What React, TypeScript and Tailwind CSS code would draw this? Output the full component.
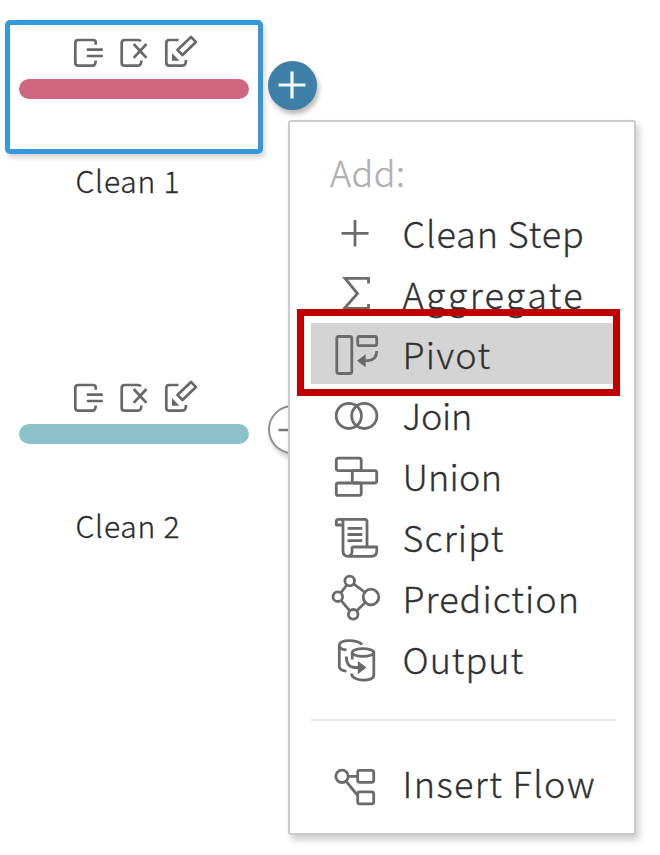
import type { ReactNode } from "react";

type ItemProps = {
  label: string;
  top: number;
  spacing: string;
  active?: boolean;
  children: ReactNode;
};

function MenuItem({ label, top, spacing, active, children }: ItemProps) {
  return (
    <li className={`flex h-[61px] items-center pl-[19px] ${active ? "bg-[#d4d4d4]" : ""}`}>
      <svg
        width="56"
        height="61"
        viewBox={`330 ${top} 56 61`}
        className="shrink-0"
        fill="none"
        stroke="#6b6b6b"
        strokeWidth="2.8"
        strokeLinejoin="round"
      >
        {children}
      </svg>
      <span className={`ml-[16.5px] whitespace-nowrap text-[36px] leading-[61px] ${spacing}`}>{label}</span>
    </li>
  );
}

function StepIcons() {
  return (
    <svg
      width="130"
      height="36"
      viewBox="70 34 130 36"
      className="block"
      fill="none"
      stroke="#686868"
      strokeWidth="2.7"
      strokeLinejoin="round"
    >
      <path d="M95.7 44.8V42.4Q95.7 40 93.3 40H78.3Q75.3 40 75.3 43V62.7Q75.3 65.7 78.3 65.7H92.5Q95.7 65.7 95.7 60.5M86.8 49.7H102.8M86.8 56H102.8" />
      <path d="M140.7 41.5Q140 40 138 40H124.7Q121.7 40 121.7 43V62.7Q121.7 65.7 124.7 65.7H138Q141.3 65.7 141.4 60.5M133.7 44L146.5 57.8M146.5 44L133.7 57.8" />
      <path d="M178.5 40H169.3Q166.3 40 166.3 43V62.7Q166.3 65.7 169.3 65.7H182.5Q186 65.7 186 60M191 36.9L196 42.1L182.5 55L177.4 49.9Z" />
      <path d="M172 53L179.4 60.8H172Z" fill="#686868" stroke="none" />
    </svg>
  );
}

function FlowNode({ label, bar, frame, place }: { label: string; bar: string; frame: string; place: string }) {
  return (
    <section className={`absolute left-[5px] flex w-[258px] flex-col ${place}`}>
      <div className={`flex h-[134px] flex-col rounded-[5px] border-[5px] pl-[9px] pt-[9px] ${frame}`}>
        <div className="pl-[51px]">
          <StepIcons />
        </div>
        <div className={`mt-[9px] h-[20px] w-[230px] rounded-full ${bar}`} />
      </div>
      <p className="mt-[5px] pl-[70.5px] text-[30px] leading-[43px] tracking-[0.8px] text-[#2b2b2b]">{label}</p>
    </section>
  );
}

export default function App() {
  return (
    <main className="relative h-[855px] w-[660px] overflow-hidden bg-white font-light [-webkit-text-stroke:0.3px_currentColor] [font-family:'Noto_Sans_CJK_SC',sans-serif]">
      <FlowNode
        label="Clean 1"
        bar="bg-[#cf667f]"
        frame="border-[#3498db] shadow-[2px_4px_5px_rgba(0,0,0,0.16)]"
        place="top-[20px]"
      />
      <FlowNode label="Clean 2" bar="bg-[#8bc1ca]" frame="border-transparent" place="top-[365px]" />

      <div className="absolute left-[267.5px] top-[60.5px] flex size-[49px] items-center justify-center rounded-full bg-[#3d7fa6] shadow-[2px_4px_5px_rgba(0,0,0,0.28)]">
        <svg width="28" height="28" viewBox="0 0 28 28" stroke="#f2f8fb" strokeWidth="3.2">
          <path d="M0.5 14H27.5M14 0.5V27.5" />
        </svg>
      </div>
      <div className="absolute left-[267.5px] top-[405px] flex size-[49px] items-center justify-center rounded-full border-[2px] border-[#909090] bg-white shadow-[2px_4px_5px_rgba(0,0,0,0.2)]">
        <svg width="28" height="28" viewBox="0 0 28 28" stroke="#787878" strokeWidth="2.5">
          <path d="M0.5 14H27.5M14 0.5V27.5" />
        </svg>
      </div>

      <nav className="absolute left-[288px] top-[120px] flex h-[715px] w-[348px] flex-col rounded-[3px] border-[2px] border-[#cbcbcb] bg-white pl-[21px] pr-[19px] pt-[18px] text-[#303030] shadow-[3px_5px_7px_rgba(0,0,0,0.2)]">
        <h2 className="h-[61px] pl-[19px] pt-px text-[36px] leading-[61px] tracking-[0.4px] text-[#b0b0b0]">Add:</h2>
        <ul className="flex flex-col">
          <MenuItem label="Clean Step" top={201} spacing="pt-[2px] tracking-[0.9px]">
            <path d="M341.5 233.3H368.5M355 220V246.5" />
          </MenuItem>
          <MenuItem label="Aggregate" top={262} spacing="pt-[2px] tracking-[2.3px]">
            <path d="M368.5 283.5V278.3H345L357.5 293.5L344.5 308.3H368.5V304" strokeLinejoin="miter" />
          </MenuItem>
          <MenuItem label="Pivot" top={323} spacing="tracking-[1.3px]" active>
            <rect x="336.8" y="336.5" width="15" height="37" rx="2" />
            <rect x="357.7" y="336.5" width="19" height="9.2" rx="2" />
            <path d="M364 360.7H368Q376.5 360 376.8 351" />
            <path d="M357 360.7L365.7 354.3V367.3Z" fill="#686868" stroke="none" />
          </MenuItem>
          <MenuItem label="Join" top={384} spacing="tracking-[-0.2px]">
            <circle cx="348.8" cy="415.9" r="12.6" />
            <circle cx="364.3" cy="415.9" r="12.6" />
          </MenuItem>
          <MenuItem label="Union" top={445} spacing="tracking-[0.2px]">
            <rect x="336.3" y="458.2" width="24.9" height="12.4" rx="2" />
            <rect x="352.3" y="470.6" width="24.4" height="12.4" rx="2" />
            <rect x="336.3" y="483" width="24.9" height="12.4" rx="2" />
          </MenuItem>
          <MenuItem label="Script" top={506} spacing="tracking-[1.2px]">
            <path d="M367 546.5V521.5Q367 519.3 364.8 519.3H338.5Q336.3 519.3 336.3 521.5V525H343M343 526V522Q343 519.5 340.5 519.3M343 525V551Q343 556.3 348.3 556.3H371.5Q376.8 556.3 376.8 550.5V547H353.5Q352 547 352 549V551.5Q352 556.3 347.5 556.3" />
            <path d="M347.5 528.4H362.3M347.5 534.5H362.3M347.5 540.6H362.3" />
          </MenuItem>
          <MenuItem label="Prediction" top={567} spacing="tracking-[1.05px]">
            <circle cx="349.7" cy="581" r="4.8" />
            <circle cx="337.8" cy="596.7" r="4.8" />
            <circle cx="353.2" cy="614.3" r="4.8" />
            <circle cx="371" cy="597" r="7.8" />
            <path d="M346.8 585L340.8 592.8M353.6 583.8L364.5 592M341 600.4L349.6 610.6M356.7 610.8L365.3 602.6" />
          </MenuItem>
          <MenuItem label="Output" top={628} spacing="tracking-[1px]">
            <path d="M362 644.5C358 639.8 339.3 638.5 339.3 645.5V667Q340 670.4 346.5 671.2M339.3 645.5Q339.5 649.5 346.5 649.8" />
            <ellipse cx="363" cy="652.5" rx="10.8" ry="3.9" />
            <path d="M352.2 652.5V659.5M373.8 652.5V675.5C373.8 682 351.5 682 351.5 673.5M346.3 656.5Q346.5 667.5 355 667.5H360" />
            <path d="M357.8 661L366.5 667.6L357.8 674.2Z" fill="#686868" stroke="none" />
          </MenuItem>
        </ul>
        <hr className="mb-[30px] mt-[30px] h-[2px] w-[305px] shrink-0 border-0 bg-[#e8e8e8]" />
        <ul>
          <MenuItem label="Insert Flow" top={751} spacing="pt-[2px] tracking-[1.4px]">
            <circle cx="342" cy="776.3" r="6.2" />
            <path d="M348.2 776.3H357.7M346 781.2L357.7 795.5" />
            <rect x="357.7" y="770.3" width="16" height="12" rx="2" />
            <rect x="357.7" y="791.8" width="16" height="12" rx="2" />
          </MenuItem>
        </ul>
      </nav>
      <div className="absolute left-[297px] top-[309px] h-[87px] w-[323px] border-[7px] border-[#c00000]" />
    </main>
  );
}
